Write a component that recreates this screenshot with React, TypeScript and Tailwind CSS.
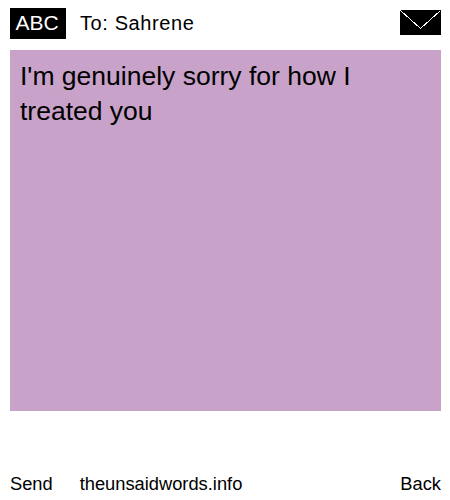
export default function App() {
  return (
    <div className="flex h-[500px] w-[450px] flex-col bg-white pl-[10px] pr-[9px] pt-2 font-['Liberation_Sans',sans-serif] text-black">
      <div className="flex h-[31px] items-start">
        <div className="flex h-[31px] w-14 items-center justify-center bg-black pb-px pr-[2px] text-[21px] text-white">ABC</div>
        <div className="ml-[14px] pt-[2px] text-xl leading-[26px] tracking-[0.6px]">To: Sahrene</div>
        <svg className="ml-auto mt-[2px]" width="41" height="25" viewBox="0 0 41 25" shapeRendering="crispEdges">
          <rect width="41" height="25" fill="#000" />
          <path d="M0.5 0.5 L20.5 18.5 L40.5 0.5" fill="none" stroke="#fff" strokeWidth="1" />
        </svg>
      </div>
      <div className="mt-[11px] h-[361px] bg-[#c8a2c8] px-[10px] pb-[10px] pt-[9px] text-[26.5px] leading-[34.5px]">
        I'm genuinely sorry for how I treated you
      </div>
      <div className="mt-[63px] flex text-[18.3px] leading-[20px]">
        <span>Send</span>
        <span className="ml-[27px]">theunsaidwords.info</span>
        <span className="ml-auto">Back</span>
      </div>
    </div>
  );
}
